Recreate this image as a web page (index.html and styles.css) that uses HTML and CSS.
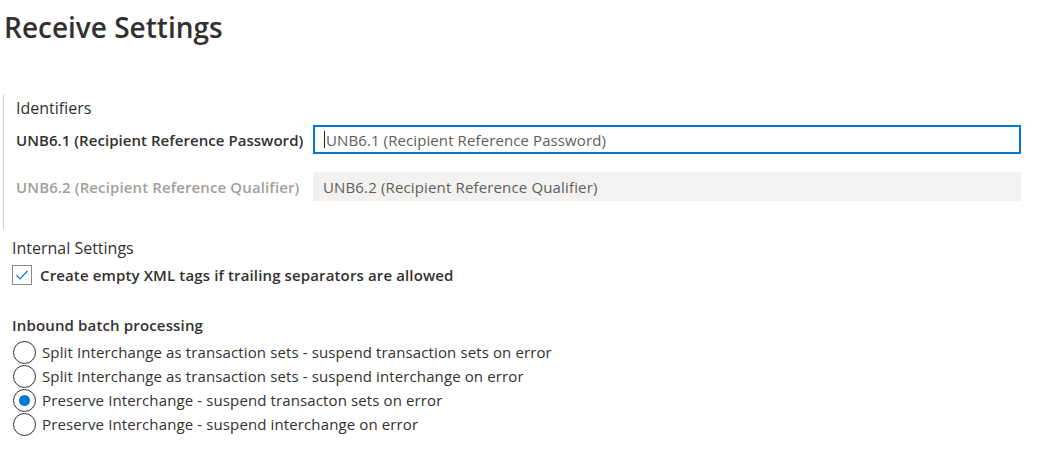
FILE: index.html
```html
<!DOCTYPE html>
<html>
<head>
<meta charset="utf-8">
<link rel="stylesheet" href="styles.css">
</head>
<body>
<div class="page">
  <h1 class="title">Receive Settings</h1>
  <div class="group">
    <div class="group-title">Identifiers</div>
    <div class="field-row">
      <label class="field-label">UNB6.1 (Recipient Reference Password)</label>
      <div class="input focused"><span class="caret"></span><span class="placeholder">UNB6.1 (Recipient Reference Password)</span></div>
    </div>
    <div class="field-row disabled">
      <label class="field-label">UNB6.2 (Recipient Reference Qualifier)</label>
      <div class="input disabled-input"><span class="placeholder">UNB6.2 (Recipient Reference Qualifier)</span></div>
    </div>
  </div>
  <div class="section">
    <div class="section-title">Internal Settings</div>
    <div class="check-row">
      <span class="checkbox"><svg width="14" height="14" viewBox="0 0 14 14"><path d="M1.5 7.5 L5 11 L12.5 3" fill="none" stroke="#0078d4" stroke-width="1.2"/></svg></span>
      <span class="check-label">Create empty XML tags if trailing separators are allowed</span>
    </div>
    <div class="radio-group">
      <div class="radio-title">Inbound batch processing</div>
      <div class="radio-row"><span class="radio"></span><span class="radio-label">Split Interchange as transaction sets - suspend transaction sets on error</span></div>
      <div class="radio-row"><span class="radio"></span><span class="radio-label">Split Interchange as transaction sets - suspend interchange on error</span></div>
      <div class="radio-row"><span class="radio checked"></span><span class="radio-label">Preserve Interchange - suspend transacton sets on error</span></div>
      <div class="radio-row"><span class="radio"></span><span class="radio-label">Preserve Interchange - suspend interchange on error</span></div>
    </div>
  </div>
</div>
</body>
</html>
```
FILE: styles.css
```css
* { box-sizing: border-box; }
body {
  margin: 0;
  background: #fff;
  font-family: "Open Sans", "Noto Sans", sans-serif;
  color: #323130;
}
.page {
  width: 1061px;
  padding: 0 40px 0 3px;
}
.title {
  margin: 0;
  padding: 9px 0 0 1px;
  height: 95px;
  font-size: 28px;
  font-weight: 600;
  line-height: 36px;
  color: #323130;
}
.group {
  border-left: 1px solid #d2d0ce;
  padding: 2px 0 20px 12px;
  height: 134px;
}
.group-title {
  font-size: 16px;
  font-weight: 400;
  line-height: 22px;
}
.field-row {
  display: flex;
  align-items: center;
  margin-top: 6px;
}
.field-row + .field-row { margin-top: 18px; }
.field-label {
  width: 297px;
  font-size: 15px;
  font-weight: 600;
  letter-spacing: 0.05px;
  color: #323130;
}
.disabled .field-label { color: #a19f9d; letter-spacing: 0.12px; }
.input {
  flex: 1;
  height: 29px;
  display: flex;
  align-items: center;
  padding-left: 10px;
  font-size: 15px;
  letter-spacing: 0.1px;
}
.focused {
  border: 2px solid #0078d4;
  padding-left: 9px;
}
.caret {
  display: inline-block;
  width: 1px;
  height: 17px;
  background: #201f1e;
  margin-right: 1px;
}
.placeholder { color: #605e5c; }
.disabled-input { background: #f3f2f1; }
.disabled-input .placeholder { letter-spacing: 0.15px; }
.section { padding: 8px 0 0 9px; }
.section-title {
  font-size: 16px;
  line-height: 22px;
}
.check-row {
  display: flex;
  align-items: center;
  margin-top: 6px;
  height: 20px;
}
.checkbox {
  width: 20px;
  height: 20px;
  border: 1px solid #8a8886;
  display: flex;
  align-items: center;
  justify-content: center;
  margin-right: 8px;
}
.check-label {
  font-size: 15px;
  font-weight: 600;
  letter-spacing: 0.13px;
}
.radio-group { margin-top: 30px; }
.radio-title {
  font-size: 15px;
  font-weight: 600;
  letter-spacing: 0.15px;
  line-height: 20px;
  margin-bottom: 5px;
}
.radio-row {
  display: flex;
  align-items: center;
  height: 24px;
  margin-left: 1px;
}
.radio {
  width: 23px;
  height: 23px;
  border: 1px solid #323130;
  border-radius: 50%;
  margin-right: 6px;
  position: relative;
  flex: none;
}
.radio.checked::after {
  content: "";
  position: absolute;
  left: 5px;
  top: 5px;
  width: 11px;
  height: 11px;
  border-radius: 50%;
  background: #0078d4;
}
.radio-label {
  font-size: 15px;
  letter-spacing: 0.12px;
}
```
